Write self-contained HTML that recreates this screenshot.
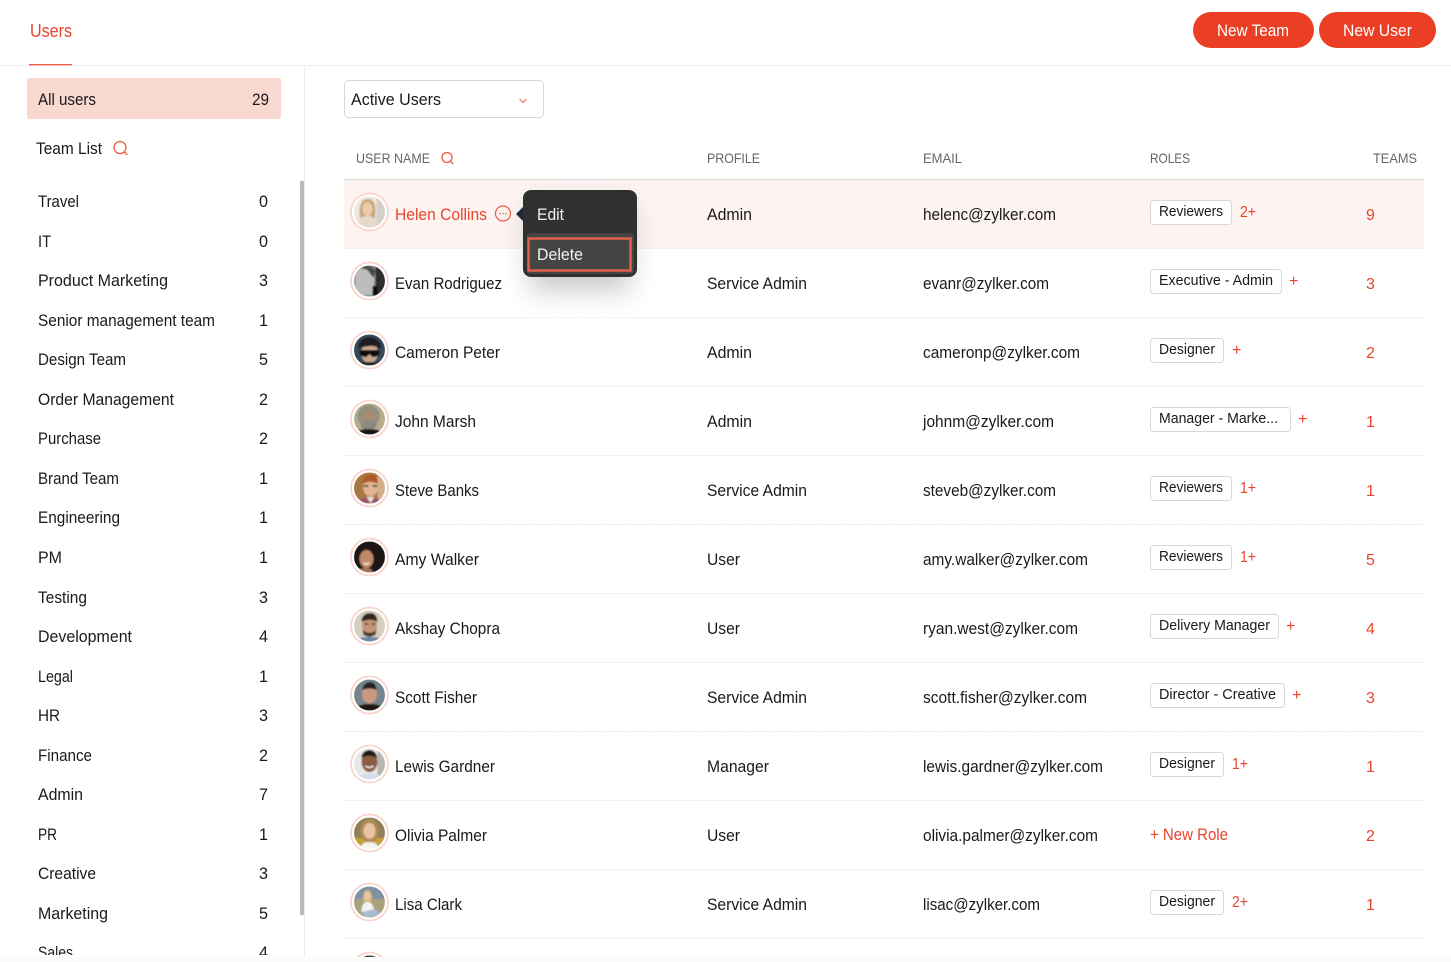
<!DOCTYPE html>
<html><head><meta charset="utf-8"><title>Users</title>
<style>
html,body{margin:0;padding:0;background:#fff;overflow:hidden;width:1451px;height:962px}
svg{display:block}
text{font-family:"Liberation Sans",sans-serif;font-size:17px;fill:#1a1a1a}
.h{font-size:14px;fill:#666}
.r{fill:#e8432c}
.c{font-size:15px;fill:#1a1a1a}
.p{font-size:16px;fill:#e8432c}
</style></head><body>
<svg width="1451" height="962" viewBox="0 0 1451 962" xmlns="http://www.w3.org/2000/svg">
<defs>
<clipPath id="cl"><circle r="15.5"/></clipPath>
<filter id="b" x="-20%" y="-20%" width="140%" height="140%"><feGaussianBlur stdDeviation="0.7"/></filter>
<filter id="sh" x="-60%" y="-60%" width="220%" height="220%"><feGaussianBlur stdDeviation="14"/></filter>
<g id="ring"><circle r="18.5" fill="#fff" stroke="#f9d5cc" stroke-width="1.8"/></g>
</defs>
<rect width="1451" height="962" fill="#fff"/>

<!-- header -->
<rect x="0" y="65" width="1451" height="1" fill="#eeeeee"/>
<text x="30" y="37" class="r" style="font-size:18px" textLength="42" lengthAdjust="spacingAndGlyphs">Users</text>
<rect x="29" y="64" width="43" height="1.3" fill="#ee5a42"/>
<rect x="1193" y="12" width="121" height="36" rx="18" fill="#ea3f25"/>
<rect x="1319" y="12" width="117" height="36" rx="18" fill="#ea3f25"/>
<text x="1217" y="36" style="fill:#fff" textLength="72" lengthAdjust="spacingAndGlyphs">New Team</text>
<text x="1343" y="36" style="fill:#fff" textLength="69" lengthAdjust="spacingAndGlyphs">New User</text>

<!-- sidebar -->
<rect x="304" y="66" width="1" height="896" fill="#eeeeee"/>
<rect x="300" y="181" width="4" height="734" fill="#bbbbbb"/>
<rect x="27" y="78" width="254" height="41" rx="2" fill="#f9d8d0"/>
<text x="38" y="105" textLength="58" lengthAdjust="spacingAndGlyphs">All users</text>
<text x="252" y="105" textLength="17" lengthAdjust="spacingAndGlyphs">29</text>
<text x="36" y="154" textLength="66" lengthAdjust="spacingAndGlyphs">Team List</text>
<g fill="none" stroke="#ee5a42" stroke-width="1.3"><circle cx="120" cy="147.5" r="6"/><path d="M124.3 152l3 3"/></g>

<g>
<text x="38" y="207" textLength="41" lengthAdjust="spacingAndGlyphs">Travel</text><text x="259" y="207" textLength="9" lengthAdjust="spacingAndGlyphs">0</text>
<text x="38" y="247" textLength="13" lengthAdjust="spacingAndGlyphs">IT</text><text x="259" y="247" textLength="9" lengthAdjust="spacingAndGlyphs">0</text>
<text x="38" y="286" textLength="130" lengthAdjust="spacingAndGlyphs">Product Marketing</text><text x="259" y="286" textLength="9" lengthAdjust="spacingAndGlyphs">3</text>
<text x="38" y="326" textLength="177" lengthAdjust="spacingAndGlyphs">Senior management team</text><text x="259" y="326" textLength="9" lengthAdjust="spacingAndGlyphs">1</text>
<text x="38" y="365" textLength="88" lengthAdjust="spacingAndGlyphs">Design Team</text><text x="259" y="365" textLength="9" lengthAdjust="spacingAndGlyphs">5</text>
<text x="38" y="405" textLength="136" lengthAdjust="spacingAndGlyphs">Order Management</text><text x="259" y="405" textLength="9" lengthAdjust="spacingAndGlyphs">2</text>
<text x="38" y="444" textLength="63" lengthAdjust="spacingAndGlyphs">Purchase</text><text x="259" y="444" textLength="9" lengthAdjust="spacingAndGlyphs">2</text>
<text x="38" y="484" textLength="81" lengthAdjust="spacingAndGlyphs">Brand Team</text><text x="259" y="484" textLength="9" lengthAdjust="spacingAndGlyphs">1</text>
<text x="38" y="523" textLength="82" lengthAdjust="spacingAndGlyphs">Engineering</text><text x="259" y="523" textLength="9" lengthAdjust="spacingAndGlyphs">1</text>
<text x="38" y="563" textLength="24" lengthAdjust="spacingAndGlyphs">PM</text><text x="259" y="563" textLength="9" lengthAdjust="spacingAndGlyphs">1</text>
<text x="38" y="603" textLength="49" lengthAdjust="spacingAndGlyphs">Testing</text><text x="259" y="603" textLength="9" lengthAdjust="spacingAndGlyphs">3</text>
<text x="38" y="642" textLength="94" lengthAdjust="spacingAndGlyphs">Development</text><text x="259" y="642" textLength="9" lengthAdjust="spacingAndGlyphs">4</text>
<text x="38" y="682" textLength="35" lengthAdjust="spacingAndGlyphs">Legal</text><text x="259" y="682" textLength="9" lengthAdjust="spacingAndGlyphs">1</text>
<text x="38" y="721" textLength="22" lengthAdjust="spacingAndGlyphs">HR</text><text x="259" y="721" textLength="9" lengthAdjust="spacingAndGlyphs">3</text>
<text x="38" y="761" textLength="54" lengthAdjust="spacingAndGlyphs">Finance</text><text x="259" y="761" textLength="9" lengthAdjust="spacingAndGlyphs">2</text>
<text x="38" y="800" textLength="45" lengthAdjust="spacingAndGlyphs">Admin</text><text x="259" y="800" textLength="9" lengthAdjust="spacingAndGlyphs">7</text>
<text x="38" y="840" textLength="19" lengthAdjust="spacingAndGlyphs">PR</text><text x="259" y="840" textLength="9" lengthAdjust="spacingAndGlyphs">1</text>
<text x="38" y="879" textLength="58" lengthAdjust="spacingAndGlyphs">Creative</text><text x="259" y="879" textLength="9" lengthAdjust="spacingAndGlyphs">3</text>
<text x="38" y="919" textLength="70" lengthAdjust="spacingAndGlyphs">Marketing</text><text x="259" y="919" textLength="9" lengthAdjust="spacingAndGlyphs">5</text>
<text x="38" y="958" textLength="35" lengthAdjust="spacingAndGlyphs">Sales</text><text x="259" y="958" textLength="9" lengthAdjust="spacingAndGlyphs">4</text>
</g>
<rect x="0" y="955" width="300" height="3" fill="#fff"/>

<!-- dropdown -->
<rect x="344.5" y="80.5" width="199" height="37" rx="4" fill="#fff" stroke="#d6d6d6"/>
<text x="351" y="105" textLength="90" lengthAdjust="spacingAndGlyphs">Active Users</text>
<path d="M519.5 99l3.5 3.5 3.5-3.5" fill="none" stroke="#ee7a66" stroke-width="1.2"/>

<!-- table head -->
<text x="356" y="163" class="h" textLength="74" lengthAdjust="spacingAndGlyphs">USER NAME</text>
<g fill="none" stroke="#ee5a42" stroke-width="1.3"><circle cx="447" cy="157.5" r="5"/><path d="M450.6 161.3l2.6 2.6"/></g>
<text x="707" y="163" class="h" textLength="53" lengthAdjust="spacingAndGlyphs">PROFILE</text>
<text x="923" y="163" class="h" textLength="39" lengthAdjust="spacingAndGlyphs">EMAIL</text>
<text x="1150" y="163" class="h" textLength="40" lengthAdjust="spacingAndGlyphs">ROLES</text>
<text x="1373" y="163" class="h" textLength="44" lengthAdjust="spacingAndGlyphs">TEAMS</text>

<!-- rows -->
<rect x="344" y="180" width="1080" height="68" fill="#fdf4f2"/>
<rect x="344" y="179" width="1080" height="1.2" fill="#dedede"/>
<g stroke="#e4e4e4" stroke-width="1" stroke-dasharray="1.5 1.5">
<path d="M344 248.500H1424M344 317.500H1424M344 386.500H1424M344 455.500H1424M344 524.500H1424M344 593.500H1424M344 662.500H1424M344 731.500H1424M344 800.500H1424M344 869.500H1424M344 938.500H1424"/>
</g>

<!-- names -->
<text x="395" y="220" class="r" textLength="92" lengthAdjust="spacingAndGlyphs">Helen Collins</text>
<text x="395" y="289" textLength="107" lengthAdjust="spacingAndGlyphs">Evan Rodriguez</text>
<text x="395" y="358" textLength="105" lengthAdjust="spacingAndGlyphs">Cameron Peter</text>
<text x="395" y="427" textLength="81" lengthAdjust="spacingAndGlyphs">John Marsh</text>
<text x="395" y="496" textLength="84" lengthAdjust="spacingAndGlyphs">Steve Banks</text>
<text x="395" y="565" textLength="84" lengthAdjust="spacingAndGlyphs">Amy Walker</text>
<text x="395" y="634" textLength="105" lengthAdjust="spacingAndGlyphs">Akshay Chopra</text>
<text x="395" y="703" textLength="82" lengthAdjust="spacingAndGlyphs">Scott Fisher</text>
<text x="395" y="772" textLength="100" lengthAdjust="spacingAndGlyphs">Lewis Gardner</text>
<text x="395" y="841" textLength="92" lengthAdjust="spacingAndGlyphs">Olivia Palmer</text>
<text x="395" y="910" textLength="67" lengthAdjust="spacingAndGlyphs">Lisa Clark</text>

<!-- profile -->
<text x="707" y="220" textLength="45" lengthAdjust="spacingAndGlyphs">Admin</text>
<text x="707" y="289" textLength="100" lengthAdjust="spacingAndGlyphs">Service Admin</text>
<text x="707" y="358" textLength="45" lengthAdjust="spacingAndGlyphs">Admin</text>
<text x="707" y="427" textLength="45" lengthAdjust="spacingAndGlyphs">Admin</text>
<text x="707" y="496" textLength="100" lengthAdjust="spacingAndGlyphs">Service Admin</text>
<text x="707" y="565" textLength="33" lengthAdjust="spacingAndGlyphs">User</text>
<text x="707" y="634" textLength="33" lengthAdjust="spacingAndGlyphs">User</text>
<text x="707" y="703" textLength="100" lengthAdjust="spacingAndGlyphs">Service Admin</text>
<text x="707" y="772" textLength="62" lengthAdjust="spacingAndGlyphs">Manager</text>
<text x="707" y="841" textLength="33" lengthAdjust="spacingAndGlyphs">User</text>
<text x="707" y="910" textLength="100" lengthAdjust="spacingAndGlyphs">Service Admin</text>

<!-- email -->
<text x="923" y="220" textLength="133" lengthAdjust="spacingAndGlyphs">helenc@zylker.com</text>
<text x="923" y="289" textLength="126" lengthAdjust="spacingAndGlyphs">evanr@zylker.com</text>
<text x="923" y="358" textLength="157" lengthAdjust="spacingAndGlyphs">cameronp@zylker.com</text>
<text x="923" y="427" textLength="131" lengthAdjust="spacingAndGlyphs">johnm@zylker.com</text>
<text x="923" y="496" textLength="133" lengthAdjust="spacingAndGlyphs">steveb@zylker.com</text>
<text x="923" y="565" textLength="165" lengthAdjust="spacingAndGlyphs">amy.walker@zylker.com</text>
<text x="923" y="634" textLength="155" lengthAdjust="spacingAndGlyphs">ryan.west@zylker.com</text>
<text x="923" y="703" textLength="164" lengthAdjust="spacingAndGlyphs">scott.fisher@zylker.com</text>
<text x="923" y="772" textLength="180" lengthAdjust="spacingAndGlyphs">lewis.gardner@zylker.com</text>
<text x="923" y="841" textLength="175" lengthAdjust="spacingAndGlyphs">olivia.palmer@zylker.com</text>
<text x="923" y="910" textLength="117" lengthAdjust="spacingAndGlyphs">lisac@zylker.com</text>

<!-- roles -->
<g fill="#fff" stroke="#d8d8d8">
<rect x="1150.500" y="200.500" width="81" height="24" rx="3"/>
<rect x="1150.500" y="269.500" width="131" height="24" rx="3"/>
<rect x="1150.500" y="338.500" width="73" height="24" rx="3"/>
<rect x="1150.500" y="407.500" width="140" height="24" rx="3"/>
<rect x="1150.500" y="476.500" width="81" height="24" rx="3"/>
<rect x="1150.500" y="545.500" width="81" height="24" rx="3"/>
<rect x="1150.500" y="614.500" width="128" height="24" rx="3"/>
<rect x="1150.500" y="683.500" width="134" height="24" rx="3"/>
<rect x="1150.500" y="752.500" width="73" height="24" rx="3"/>
<rect x="1150.500" y="890.500" width="73" height="24" rx="3"/>
</g>
<text x="1159" y="216" class="c" textLength="64" lengthAdjust="spacingAndGlyphs">Reviewers</text>
<text x="1159" y="285" class="c" textLength="114" lengthAdjust="spacingAndGlyphs">Executive - Admin</text>
<text x="1159" y="354" class="c" textLength="56" lengthAdjust="spacingAndGlyphs">Designer</text>
<text x="1159" y="423" class="c" textLength="119" lengthAdjust="spacingAndGlyphs">Manager - Marke...</text>
<text x="1159" y="492" class="c" textLength="64" lengthAdjust="spacingAndGlyphs">Reviewers</text>
<text x="1159" y="561" class="c" textLength="64" lengthAdjust="spacingAndGlyphs">Reviewers</text>
<text x="1159" y="630" class="c" textLength="111" lengthAdjust="spacingAndGlyphs">Delivery Manager</text>
<text x="1159" y="699" class="c" textLength="117" lengthAdjust="spacingAndGlyphs">Director - Creative</text>
<text x="1159" y="768" class="c" textLength="56" lengthAdjust="spacingAndGlyphs">Designer</text>
<text x="1159" y="906" class="c" textLength="56" lengthAdjust="spacingAndGlyphs">Designer</text>

<text x="1240" y="217" class="p" textLength="16" lengthAdjust="spacingAndGlyphs">2+</text>
<text x="1289" y="286" class="p">+</text>
<text x="1232" y="355" class="p">+</text>
<text x="1298" y="424" class="p">+</text>
<text x="1240" y="493" class="p" textLength="16" lengthAdjust="spacingAndGlyphs">1+</text>
<text x="1240" y="562" class="p" textLength="16" lengthAdjust="spacingAndGlyphs">1+</text>
<text x="1286" y="631" class="p">+</text>
<text x="1292" y="700" class="p">+</text>
<text x="1232" y="769" class="p" textLength="16" lengthAdjust="spacingAndGlyphs">1+</text>
<text x="1150" y="840" class="r" textLength="78" lengthAdjust="spacingAndGlyphs">+ New Role</text>
<text x="1232" y="907" class="p" textLength="16" lengthAdjust="spacingAndGlyphs">2+</text>

<!-- teams -->
<text x="1366" y="220" class="p">9</text>
<text x="1366" y="289" class="p">3</text>
<text x="1366" y="358" class="p">2</text>
<text x="1366" y="427" class="p">1</text>
<text x="1366" y="496" class="p">1</text>
<text x="1366" y="565" class="p">5</text>
<text x="1366" y="634" class="p">4</text>
<text x="1366" y="703" class="p">3</text>
<text x="1366" y="772" class="p">1</text>
<text x="1366" y="841" class="p">2</text>
<text x="1366" y="910" class="p">1</text>

<!-- avatars -->
<g transform="translate(369.500 212)"><use href="#ring"/><g clip-path="url(#cl)"><g filter="url(#b)"><rect x="-16" y="-16" width="32" height="32" fill="#ece8e2"/><rect x="7" y="-16" width="9" height="32" fill="#d4cfc8"/><path d="M-9 8c-2-10-1-21 7-21s9 9 7 21z" fill="#c8a878"/><ellipse cx="-2" cy="-3" rx="5" ry="7" fill="#ecc9ad"/><path d="M-13 16c0-9 5-12 11-12s10 3 10 12z" fill="#e3dac8"/></g></g></g>
<g transform="translate(369.500 281)"><use href="#ring"/><g clip-path="url(#cl)"><g filter="url(#b)"><rect x="-16" y="-16" width="32" height="32" fill="#8e8e8e"/><rect x="6" y="-16" width="10" height="32" fill="#2e2e2e"/><path d="M-14-6c2-7 10-9 16-6l3 8-2 18h-17z" fill="#bdbdbd"/><path d="M-9-13c6-4 13-2 15 3l-2 7-6-8z" fill="#4a4a4a"/><rect x="3" y="5" width="5" height="10" fill="#111"/></g></g></g>
<g transform="translate(369.500 350)"><use href="#ring"/><g clip-path="url(#cl)"><g filter="url(#b)"><rect x="-16" y="-16" width="32" height="32" fill="#34495a"/><ellipse cx="0" cy="3" rx="8.500" ry="10" fill="#c9a58e"/><path d="M-11-1c-1-11 9-13 15-11s9 7 7 11c-5-4-14-4-22 0z" fill="#1e1e22"/><path d="M-10 0h20v3c0 3-4 4-7 4l-3-3-3 3c-3 0-7-1-7-4z" fill="#0c0c0c"/><path d="M-14 16c2-3 8-4 14-4s12 1 14 4z" fill="#20262c"/></g></g></g>
<g transform="translate(369.500 419)"><use href="#ring"/><g clip-path="url(#cl)"><g filter="url(#b)"><rect x="-16" y="-16" width="32" height="32" fill="#b8ac8a"/><ellipse cx="-1" cy="-3" rx="11" ry="11" fill="#8f9083"/><ellipse cx="-1" cy="-1" rx="6.500" ry="8" fill="#a88c72"/><ellipse cx="-1" cy="6" rx="8" ry="5" fill="#8c8a80"/><path d="M-16 16c2-5 8-6 15-6s13 1 17 6z" fill="#141414"/></g></g></g>
<g transform="translate(369.500 488)"><use href="#ring"/><g clip-path="url(#cl)"><g filter="url(#b)"><rect x="-16" y="-16" width="32" height="32" fill="#a9743f"/><rect x="8" y="-16" width="8" height="32" fill="#d0b088"/><ellipse cx="1" cy="-1" rx="7.500" ry="9.500" fill="#e3b496"/><path d="M-7-4c0-8 6-9 10-9s6 4 5 9c-4-3-10-3-15 0z" fill="#ab5a28"/><path d="M-6-2h5M3-2h5" stroke="#333" stroke-width="1.500"/><path d="M-12 16c1-5 7-7 13-7s10 2 11 7z" fill="#9c5566"/><path d="M-3 9l4 6 4-6z" fill="#e6e0d8"/></g></g></g>
<g transform="translate(369.500 557)"><use href="#ring"/><g clip-path="url(#cl)"><g filter="url(#b)"><rect x="-16" y="-16" width="32" height="32" fill="#1a1614"/><ellipse cx="-3" cy="2" rx="7" ry="9" fill="#bf8a68"/><path d="M-6 6q3 2 6 0" stroke="#fff" stroke-width="1.300" fill="none"/><path d="M-14 16c2-4 7-5 11-5s6 2 7 5z" fill="#a87458"/></g></g></g>
<g transform="translate(369.500 626)"><use href="#ring"/><g clip-path="url(#cl)"><g filter="url(#b)"><rect x="-16" y="-16" width="32" height="32" fill="#d6cfc0"/><ellipse cx="0" cy="0" rx="7.500" ry="9.500" fill="#c49474"/><path d="M-8-4c0-7 5-9 9-9s7 3 7 9c-4-3-11-3-16 0z" fill="#34271e"/><path d="M-7 3c2 5 12 5 14 0l-1 6-6 2-6-2z" fill="#4c3a2c"/><path d="M-5-2h4M2-2h4" stroke="#222" stroke-width="1.200"/><path d="M-15 16c2-4 8-5 15-5s13 1 15 5z" fill="#6c8aa6"/></g></g></g>
<g transform="translate(369.500 695)"><use href="#ring"/><g clip-path="url(#cl)"><g filter="url(#b)"><rect x="-16" y="-16" width="32" height="32" fill="#75858c"/><ellipse cx="0" cy="-1" rx="7.500" ry="9.500" fill="#c99a82"/><path d="M-7-5c0-6 5-8 8-8s6 3 6 8c-4-2-10-2-14 0z" fill="#282220"/><path d="M-16 16c1-5 8-7 16-7s15 2 16 7z" fill="#201414"/></g></g></g>
<g transform="translate(369.500 764)"><use href="#ring"/><g clip-path="url(#cl)"><g filter="url(#b)"><rect x="-16" y="-16" width="32" height="32" fill="#e8e8e6"/><rect x="8" y="-16" width="8" height="32" fill="#b6b8b0"/><ellipse cx="0" cy="-2" rx="8" ry="10" fill="#8c5c42"/><path d="M-8-6c0-6 5-8 8-8s7 2 8 8c-4-3-12-3-16 0z" fill="#1e1a18"/><path d="M-4 2q4 3 8 0" stroke="#fff" stroke-width="1.300" fill="none"/><path d="M-14 16c1-5 7-6 14-6s12 1 14 6z" fill="#d6dce8"/></g></g></g>
<g transform="translate(369.500 833)"><use href="#ring"/><g clip-path="url(#cl)"><g filter="url(#b)"><rect x="-16" y="-16" width="32" height="32" fill="#90805a"/><rect x="-16" y="5" width="32" height="11" fill="#c8a038"/><ellipse cx="0" cy="-2" rx="9" ry="12" fill="#b08a52"/><ellipse cx="0" cy="-2" rx="6" ry="8" fill="#eac4a6"/><path d="M-9 16c0-5 4-7 9-7s9 2 9 7z" fill="#f4f4f0"/></g></g></g>
<g transform="translate(369.500 902)"><use href="#ring"/><g clip-path="url(#cl)"><g filter="url(#b)"><rect x="-16" y="-16" width="32" height="32" fill="#7e92a4"/><rect x="-16" y="-3" width="32" height="19" fill="#a8a27c"/><ellipse cx="-2" cy="-5" rx="4.500" ry="7" fill="#d6b878"/><ellipse cx="-2" cy="-6" rx="3" ry="4" fill="#e8c4a8"/><path d="M-8 10c0-8 3-10 6-10s6 2 7 10z" fill="#f4f4f4"/><path d="M-8 10l14-3 6 6-16 3z" fill="#a8bcd0"/></g></g></g>
<g transform="translate(369.500 971)"><use href="#ring"/><g clip-path="url(#cl)"><rect x="-16" y="-16" width="32" height="32" fill="#9ab8c4"/><ellipse cx="0" cy="-12" rx="6" ry="4" fill="#444"/></g></g>

<!-- row action + popup -->
<g fill="none" stroke="#ee5a42" stroke-width="1.2"><circle cx="503" cy="213.500" r="7.500"/></g>
<g fill="#ee5a42"><circle cx="500" cy="213.500" r=".8"/><circle cx="503" cy="213.500" r=".8"/><circle cx="506" cy="213.500" r=".8"/></g>
<rect x="530" y="205" width="100" height="85" fill="#000" opacity=".22" filter="url(#sh)"/>
<path d="M516 214l8-8v16z" fill="#1f2a38"/>
<rect x="523" y="190" width="114" height="87" rx="8" fill="#303030"/>
<rect x="527" y="233" width="107" height="41" rx="3" fill="#454545"/>
<rect x="528.500" y="238.500" width="102" height="32" fill="none" stroke="#e8604a" stroke-width="2.400"/>
<text x="537" y="220" style="fill:#f2f2f2" textLength="27" lengthAdjust="spacingAndGlyphs">Edit</text>
<text x="537" y="260" style="fill:#f2f2f2" textLength="46" lengthAdjust="spacingAndGlyphs">Delete</text>

<!-- bottom strip -->
<rect x="0" y="957" width="1451" height="5" fill="#fbfbfb"/>
</svg>
</body></html>
